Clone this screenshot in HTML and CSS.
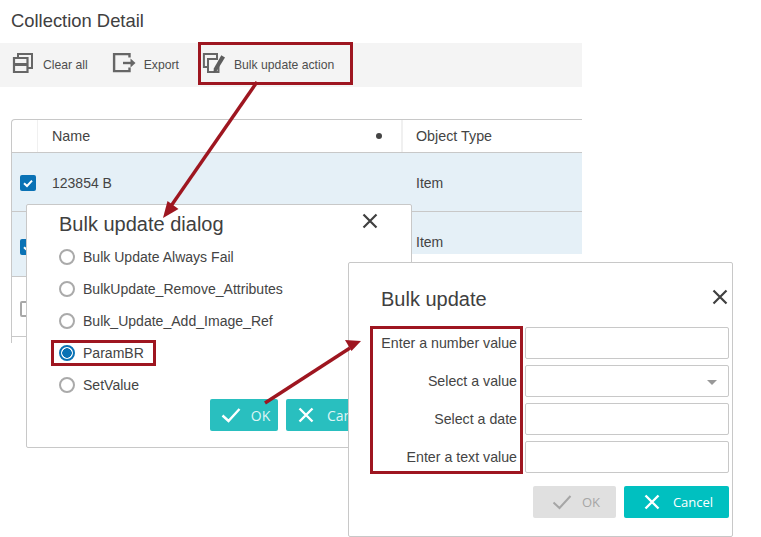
FILE: index.html
```html
<!DOCTYPE html>
<html lang="en">
<head>
<meta charset="utf-8">
<title>Collection Detail</title>
<link rel="stylesheet" href="styles.css">
</head>
<body>
<main class="canvas">
  <h1 class="page-title">Collection Detail</h1>
  <div class="toolbar">
    <button class="tool tool-clear">
      <svg class="tool-icon" viewBox="0 0 22 22" width="22" height="22"><path d="M6 5V2h14v14h-4" fill="none" stroke="#666" stroke-width="2"/><path d="M2 6h13.500v14H2z" fill="none" stroke="#666" stroke-width="2.200"/><path d="M2 11h14v3H2z" fill="#666"/></svg>
      <span>Clear all</span>
    </button>
    <button class="tool tool-export">
      <svg class="tool-icon" viewBox="0 0 24 22" width="24" height="22"><path d="M17.500 5.500V2.100H2.100v17H17.500V15.500" fill="none" stroke="#666" stroke-width="2.400"/><path d="M11 9.800h8v2.400h-8z" fill="#666"/><path d="M18.500 6.500l5 4.500-5 4.500z" fill="#666"/></svg>
      <span>Export</span>
    </button>
    <button class="tool tool-bulk">
      <svg class="tool-icon" viewBox="0 0 24 22" width="24" height="22"><path d="M5.500 15H1.900V2H15v4" fill="none" stroke="#666" stroke-width="2"/><path d="M16.500 12v8H6V7h10" fill="none" stroke="#666" stroke-width="2"/><path d="M19.300 3.200l3.700 2.400-8 13-3.500 2.400.3-4.600z" fill="#5c5c5c"/></svg>
      <span>Bulk update action</span>
    </button>
  </div>
  <div class="grid-table">
    <div class="row row-head">
      <div class="cell cell-check"></div>
      <div class="cell cell-name">Name<i class="dot"></i></div>
      <div class="cell cell-type">Object Type</div>
    </div>
    <div class="row row-sel">
      <div class="cell cell-check"><span class="check on"><svg viewBox="0 0 16 16" width="16" height="16"><path d="M4 8.200l3 2.800 5-5.400" fill="none" stroke="#fff" stroke-width="2"/></svg></span></div>
      <div class="cell cell-name">123854 B</div>
      <div class="cell cell-type">Item</div>
    </div>
    <div class="row row-sel">
      <div class="cell cell-check"><span class="check on"><svg viewBox="0 0 16 16" width="16" height="16"><path d="M4 8.200l3 2.800 5-5.400" fill="none" stroke="#fff" stroke-width="2"/></svg></span></div>
      <div class="cell cell-name"></div>
      <div class="cell cell-type">Item</div>
    </div>
    <div class="row row-plain">
      <div class="cell cell-check"><span class="check"></span></div>
      <div class="cell cell-name"></div>
      <div class="cell cell-type"></div>
    </div>
    <div class="table-tail"></div>
  </div>

  <div class="gap-mask"></div>

  <section class="dialog dialog-one">
    <header class="dialog-head">
      <h2>Bulk update dialog</h2>
      <svg class="close" viewBox="0 0 16 16" width="16" height="16"><path d="M1.500 1.500l13 13M14.500 1.500l-13 13" stroke="#404040" stroke-width="2.200" fill="none"/></svg>
    </header>
    <ul class="radios">
      <li><i class="radio"></i>Bulk Update Always Fail</li>
      <li><i class="radio"></i>BulkUpdate_Remove_Attributes</li>
      <li><i class="radio"></i>Bulk_Update_Add_Image_Ref</li>
      <li><i class="radio on"></i>ParamBR</li>
      <li><i class="radio"></i>SetValue</li>
    </ul>
    <div class="actions">
      <button class="btn btn-ok-live"><svg viewBox="0 0 20 16" width="20" height="16"><path d="M1.500 8.500l6 5.500L18.500 2" fill="none" stroke="#fff" stroke-width="2.400"/></svg>OK</button>
      <button class="btn btn-cancel-soft"><svg viewBox="0 0 16 16" width="16" height="16"><path d="M1.500 1.500l13 13M14.500 1.500l-13 13" stroke="#fff" stroke-width="2.400" fill="none"/></svg>Cancel</button>
    </div>
  </section>

  <section class="dialog dialog-two">
    <header class="dialog-head">
      <h2>Bulk update</h2>
      <svg class="close" viewBox="0 0 16 16" width="16" height="16"><path d="M1.500 1.500l13 13M14.500 1.500l-13 13" stroke="#404040" stroke-width="2.200" fill="none"/></svg>
    </header>
    <div class="form">
      <label>Enter a number value</label><div class="field"></div>
      <label>Select a value</label><div class="field field-select"><i class="caret"></i></div>
      <label>Select a date</label><div class="field"></div>
      <label>Enter a text value</label><div class="field"></div>
    </div>
    <div class="actions actions-two">
      <button class="btn btn-disabled"><svg viewBox="0 0 20 16" width="20" height="16"><path d="M1.500 8.500l6 5.500L18.500 2" fill="none" stroke="#a6a6a6" stroke-width="2"/></svg>OK</button>
      <button class="btn btn-cancel"><svg viewBox="0 0 16 16" width="16" height="16"><path d="M1.500 1.500l13 13M14.500 1.500l-13 13" stroke="#fff" stroke-width="2.400" fill="none"/></svg>Cancel</button>
    </div>
  </section>

  <div class="mark mark-tool"></div>
  <div class="mark mark-radio"></div>
  <div class="mark mark-labels"></div>

  <svg class="arrows" viewBox="0 0 761 537" width="761" height="537">
    <path d="M257 82L171 206" stroke="#9e1620" stroke-width="3.400" fill="none"/>
    <path d="M163 218l4.500-17 11 8z" fill="#9e1620"/>
    <path d="M265 403l85-55" stroke="#9e1620" stroke-width="3.400" fill="none"/>
    <path d="M361 341l-16-1 6.500 11z" fill="#9e1620"/>
  </svg>
</main>
</body>
</html>
```
FILE: styles.css
```css
* { box-sizing: border-box; }
html, body { margin: 0; padding: 0; background: #fff; }
body { font-family: "Liberation Sans", Arial, sans-serif; color: #444; }
.canvas { position: relative; width: 761px; height: 537px; overflow: hidden; padding-top: 10px; }
.page-title { margin: 0 0 12px 11px; font-size: 18.4px; line-height: 21px; font-weight: 400; color: #404040; }

.toolbar { display: flex; align-items: center; width: 582px; height: 44px; background: #f4f4f4; }
.tool { display: flex; align-items: center; padding: 0; border: 0; background: none; font: 12.2px "Liberation Sans", Arial, sans-serif; color: #4e4e4e; }
.tool-icon { flex: none; margin-top: -4px; }
.tool-clear { margin-left: 12px; gap: 9px; }
.tool-export { margin-left: 24px; gap: 8px; }
.tool-bulk { margin-left: 23px; gap: 8px; }

.grid-table { width: 571px; margin: 32px 0 0 11px; border-top: 1px solid #c8c8c8; border-left: 1px solid #c8c8c8; border-top-left-radius: 4px; font-size: 14px; color: #444; }
.row { display: grid; grid-template-columns: 26px 365px 1fr; border-bottom: 1px solid #c8c8c8; }
.row-head { height: 33px; font-size: 14.3px; }
.row-sel { height: 59px; background: #e5f0f7; }
.row-sel + .row-sel { height: 65px; }
.row-plain { height: 60px; }
.table-tail { height: 6px; }
.cell { display: flex; align-items: center; padding-left: 14px; }
.cell-type { padding-left: 13px; }
.row-head .cell { padding-bottom: 1px; }
.row-sel .cell { padding-top: 2px; }
.row-sel + .row-sel .cell-type { align-items: flex-start; padding-top: 22px; }
.cell-check { padding-left: 8px; }
.row-sel .cell-check { padding-top: 1px; }
.row-sel + .row-sel .cell-check { padding-top: 6px; }
.row-plain .cell-check { padding-top: 4px; }
.row-head .cell-check { border-right: 1px solid #f0f0f0; }
.row-head .cell-name { border-right: 2px solid #f0f0f0; justify-content: space-between; padding-right: 19px; }
.dot { width: 6px; height: 6px; border-radius: 50%; background: #444; }
.check { display: block; width: 16px; height: 16px; border: 2px solid #a8a8a8; border-radius: 2px; background: #fff; }
.check.on { border: 0; background: #0a72b5; }
.check svg { display: block; }

.gap-mask { position: absolute; left: 412px; top: 254px; width: 170px; height: 30px; background: #fff; }

.dialog { position: absolute; background: #fff; border: 1px solid #c8c8c8; border-radius: 2px; }
.dialog-one { left: 26px; top: 204px; width: 386px; height: 244px; padding: 0 32px; }
.dialog-two { left: 348px; top: 262px; width: 385px; height: 275px; padding: 0 3px 0 32px; }
.dialog-head { display: flex; align-items: center; justify-content: space-between; }
.dialog-head h2 { margin: 0; font-size: 20px; font-weight: 400; line-height: 24px; color: #404040; }
.close { flex: none; }
.dialog-one .dialog-head { height: 38px; }
.dialog-one .dialog-head .close { margin-right: 1px; margin-top: -7px; }
.dialog-two .dialog-head { height: 64px; padding-top: 8px; }
.dialog-two .dialog-head .close { margin-top: -5px; margin-right: 1px; }

.radios { list-style: none; margin: -2px 0 0; padding: 0; font-size: 14.05px; color: #444; }
.radios li { display: flex; align-items: center; gap: 8px; height: 32px; }
.radio { width: 16px; height: 16px; border: 2px solid #aaa; border-radius: 50%; background: #fff; }
.radio.on { border-color: #0a72b5; background: radial-gradient(circle, #0a72b5 0 4.500px, #fff 5px); }
.actions { display: flex; gap: 8px; margin-left: 151px; margin-top: -2px; width: 250px; }
.btn { display: flex; align-items: center; justify-content: center; gap: 10px; height: 32px; border: 0; border-radius: 2px; padding: 0 0 0 3px; font: 14px "Open Sans", sans-serif; color: #fff; white-space: nowrap; overflow: hidden; flex: none; }
.btn-ok-live { width: 68px; background: #29bfbf; color: #dff5f5; }
.btn-cancel-soft { width: 105px; background: #29bfbf; color: #dff5f5; justify-content: flex-start; padding-left: 12px; gap: 13px; }

.form { display: grid; grid-template-columns: 136px 204px; column-gap: 8px; row-gap: 6px; width: 348px; }
.form label { display: flex; align-items: center; justify-content: flex-end; font-size: 14.2px; color: #444; height: 32px; white-space: nowrap; }
.field { height: 32px; border: 1px solid #c8c8c8; border-radius: 2px; background: #fff; }
.field-select { display: flex; align-items: center; justify-content: flex-end; padding-right: 11px; }
.caret { width: 0; height: 0; border-left: 5px solid transparent; border-right: 5px solid transparent; border-top: 5px solid #999; margin-top: 2px; }
.actions-two { margin: 13px 0 0 152px; width: 196px; }
.btn-disabled { width: 83px; background: #e0e0e0; color: #a6a6a6; font-size: 13px; }
.btn-cancel { width: 105px; background: #00c0c0; font-size: 13px; gap: 13px; padding-left: 4px; }

.mark { position: absolute; border: 3px solid #9e1620; }
.mark-tool { left: 198px; top: 42px; width: 155px; height: 43px; }
.mark-radio { left: 51px; top: 340px; width: 105px; height: 26px; }
.mark-labels { left: 370px; top: 326px; width: 153px; height: 148px; }
.arrows { position: absolute; left: 0; top: 0; pointer-events: none; }
```
